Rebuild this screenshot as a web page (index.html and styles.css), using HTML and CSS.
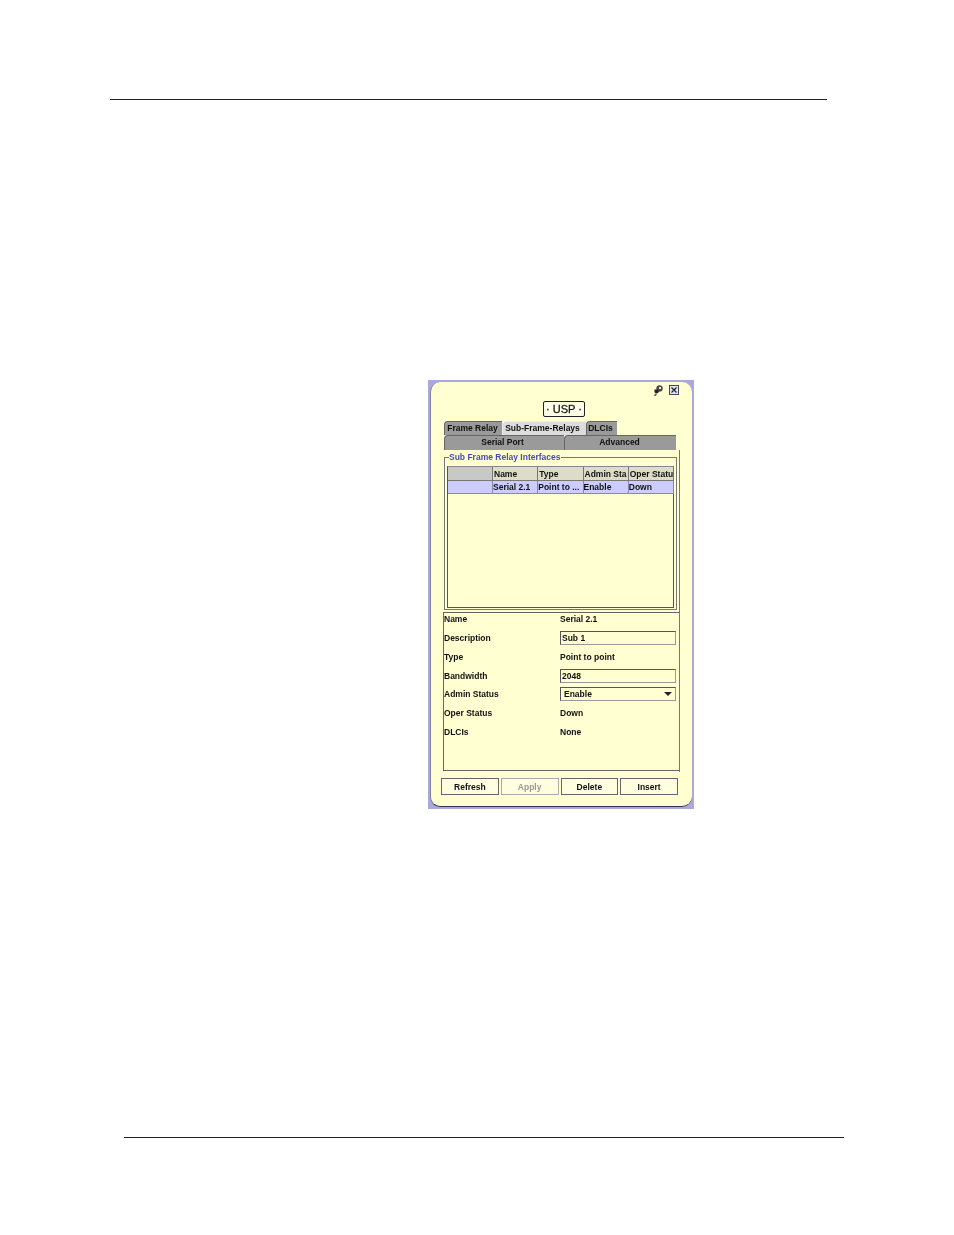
FILE: index.html
```html
<!DOCTYPE html>
<html>
<head>
  <title>USP Sub Frame Relay Interfaces</title>
  <link rel="stylesheet" href="styles.css">
</head>
<body>
  <div class="page">
    <div class="rule rule-top"></div>
    <div class="window">
      <div class="panel">
        <div class="title-icons">
          <svg class="pin-icon" width="10" height="11" viewBox="0 0 10 11">
            <circle cx="6.5" cy="3.5" r="3.2" fill="#4a4a4a"/>
            <path d="M6 2h2v2H6z" fill="#e8e8e8"/>
            <path d="M1.5 4.5h3.5l1 2.5-2 1.5-2.5-1z" fill="#222"/>
            <path d="M2 8.5h2l-1 2.5H1z" fill="#666"/>
          </svg>
          <svg class="close-icon" width="10" height="10" viewBox="0 0 10 10">
            <rect x="0.5" y="0.5" width="9" height="9" fill="#e4e4f0" stroke="#44446a"/>
            <path d="M2.5 2.5l5 5M7.5 2.5l-5 5" stroke="#222" stroke-width="1.2"/>
          </svg>
        </div>
        <div class="title-row">
          <div class="usp-badge">&middot; USP &middot;</div>
        </div>
        <div class="tabs tabs-main">
          <div class="tab tab-frame">Frame Relay</div>
          <div class="tab tab-sub active">Sub-Frame-Relays</div>
          <div class="tab tab-dlci">DLCIs</div>
        </div>
        <div class="tabs tabs-second">
          <div class="tab tab-serial">Serial Port</div>
          <div class="tab tab-advanced">Advanced</div>
        </div>
        <div class="tab-body">
          <fieldset class="group">
            <legend>Sub Frame Relay Interfaces</legend>
            <div class="table-box">
              <table class="grid">
                <thead>
                  <tr>
                    <th class="col-blank"></th>
                    <th>Name</th>
                    <th>Type</th>
                    <th>Admin Sta</th>
                    <th>Oper Statu</th>
                  </tr>
                </thead>
                <tbody>
                  <tr class="selected">
                    <td></td>
                    <td>Serial 2.1</td>
                    <td>Point to ...</td>
                    <td>Enable</td>
                    <td>Down</td>
                  </tr>
                </tbody>
              </table>
            </div>
          </fieldset>
          <div class="details">
            <div class="label first">Name</div>
            <div class="value first">Serial 2.1</div>
            <div class="label">Description</div>
            <div class="input">Sub 1</div>
            <div class="label">Type</div>
            <div class="value">Point to point</div>
            <div class="label">Bandwidth</div>
            <div class="input">2048</div>
            <div class="label">Admin Status</div>
            <div class="input select">Enable<span class="arrow"></span></div>
            <div class="label">Oper Status</div>
            <div class="value">Down</div>
            <div class="label">DLCIs</div>
            <div class="value">None</div>
          </div>
        </div>
        <div class="buttons">
          <button>Refresh</button>
          <button class="disabled">Apply</button>
          <button>Delete</button>
          <button>Insert</button>
        </div>
      </div>
    </div>
    <div class="rule rule-bottom"></div>
  </div>
</body>
</html>
```

FILE: styles.css
```css
body {
  margin: 0;
  background: #fff;
  font-family: "Liberation Sans", Arial, sans-serif;
  font-size: 8.5px;
  font-weight: bold;
  color: #111;
}
.page {
  width: 954px;
  height: 1235px;
  padding-top: 99px;
  box-sizing: border-box;
  overflow: hidden;
}
.rule {
  height: 1px;
  background: #222;
}
.rule-top {
  width: 717px;
  margin-left: 110px;
}
.rule-bottom {
  width: 720px;
  margin-left: 124px;
  margin-top: 328px;
}
.window {
  width: 266px;
  height: 429px;
  margin: 280px 0 0 428px;
  padding: 2px 2px 2px 2px;
  box-sizing: border-box;
  background: #a9a9dc;
}
.panel {
  height: 100%;
  box-sizing: border-box;
  background: #ffffd2;
  border-radius: 10px;
  border-bottom: 1px solid #33334d;
  border-left: 1px solid #8080a0;
  padding: 0 0 0 10px;
  filter: blur(0.2px);
}
.title-icons {
  display: flex;
  justify-content: flex-end;
  align-items: flex-start;
  gap: 5px;
  height: 19px;
  padding: 3px 13px 0 0;
  box-sizing: border-box;
}
.pin-icon {
  margin-right: 1px;
}
.title-row {
  display: flex;
  justify-content: center;
  height: 20px;
  padding-right: 5px;
}
.usp-badge {
  height: 16px;
  width: 42px;
  box-sizing: border-box;
  border: 1px solid #222;
  border-radius: 2px;
  background: #ffffe8;
  font-size: 11px;
  font-weight: normal;
  line-height: 14px;
  text-align: center;
  -webkit-text-stroke: 0.3px #222;
}
.tabs {
  display: flex;
  margin-left: 3px;
}
.tabs-main {
  height: 14px;
}
.tabs-second {
  height: 15px;
}
.tab {
  box-sizing: border-box;
  background: #9a9a9a;
  border-top: 1px solid #666;
  border-left: 1px solid #666;
  border-top-left-radius: 4px;
  text-align: center;
  line-height: 13px;
  white-space: nowrap;
}
.tab.active {
  background: #dcdcdc;
  border-color: #eee;
}
.tab-frame { width: 58px; padding-right: 2px; }
.tab-sub { width: 84px; padding-right: 4px; }
.tab-dlci { width: 31px; padding-right: 3px; }
.tab-serial { width: 120px; padding-right: 4px; }
.tab-advanced { width: 112px; padding-right: 2px; }
.tab-body {
  width: 237px;
  height: 322px;
  margin-left: 2px;
  padding-top: 3px;
  box-sizing: border-box;
  border-right: 1px solid #777;
}
.group {
  width: 233px;
  height: 157px;
  margin: 0 0 0 1px;
  padding: 4px 2px 2px 2px;
  box-sizing: border-box;
  border: 1px solid #777;
  min-width: 0;
}
.group legend {
  padding: 0;
  margin-left: 2px;
  color: #4a4ab0;
  line-height: 9px;
  height: 9px;
}
.table-box {
  height: 142px;
  box-sizing: border-box;
  border: 1px solid #555;
  border-top-color: #888;
}
.grid {
  width: 226px;
  table-layout: fixed;
  border-collapse: collapse;
}
.grid th {
  height: 13px;
  padding: 0 0 0 1px;
  background: #dddcc8;
  border-right: 1px solid #777;
  border-bottom: 1px solid #777;
  font-weight: bold;
  text-align: left;
  overflow: hidden;
  white-space: nowrap;
}
.grid th.col-blank {
  width: 43px;
  background: #c8c8c8;
}
.grid td {
  height: 12px;
  padding: 0;
  border-right: 1px solid #8888aa;
  overflow: hidden;
  white-space: nowrap;
}
.selected td {
  background: #ccccff;
  border-bottom: 1px solid #8888aa;
}
.details {
  width: 236px;
  height: 159px;
  margin: 2px 0 0 0;
  box-sizing: border-box;
  border: 1px solid #666;
  border-right: 0;
  display: grid;
  grid-template-columns: 116px 116px;
  grid-template-rows: 16px repeat(6, 18.7px);
  align-items: center;
  align-content: start;
}
.first {
  align-self: start;
  line-height: 13px;
}
.label {
  white-space: nowrap;
}
.input {
  height: 14px;
  box-sizing: border-box;
  border: 1px solid #555;
  border-bottom-color: #999;
  border-right-color: #999;
  line-height: 12px;
  padding-left: 1px;
}
.select {
  position: relative;
  padding-left: 3px;
}
.arrow {
  position: absolute;
  right: 3px;
  top: 4px;
  border-left: 4px solid transparent;
  border-right: 4px solid transparent;
  border-top: 4px solid #222;
}
.buttons {
  display: flex;
  gap: 2px;
  width: 237px;
  margin: 6px 0 0 0;
}
.buttons button {
  flex: 1;
  height: 17px;
  padding: 0;
  background: #ffffe0;
  border: 1px solid #666;
  font-family: inherit;
  font-size: 8.5px;
  font-weight: bold;
  color: #111;
}
.buttons .disabled {
  color: #999;
  border-color: #aaa;
}
```
